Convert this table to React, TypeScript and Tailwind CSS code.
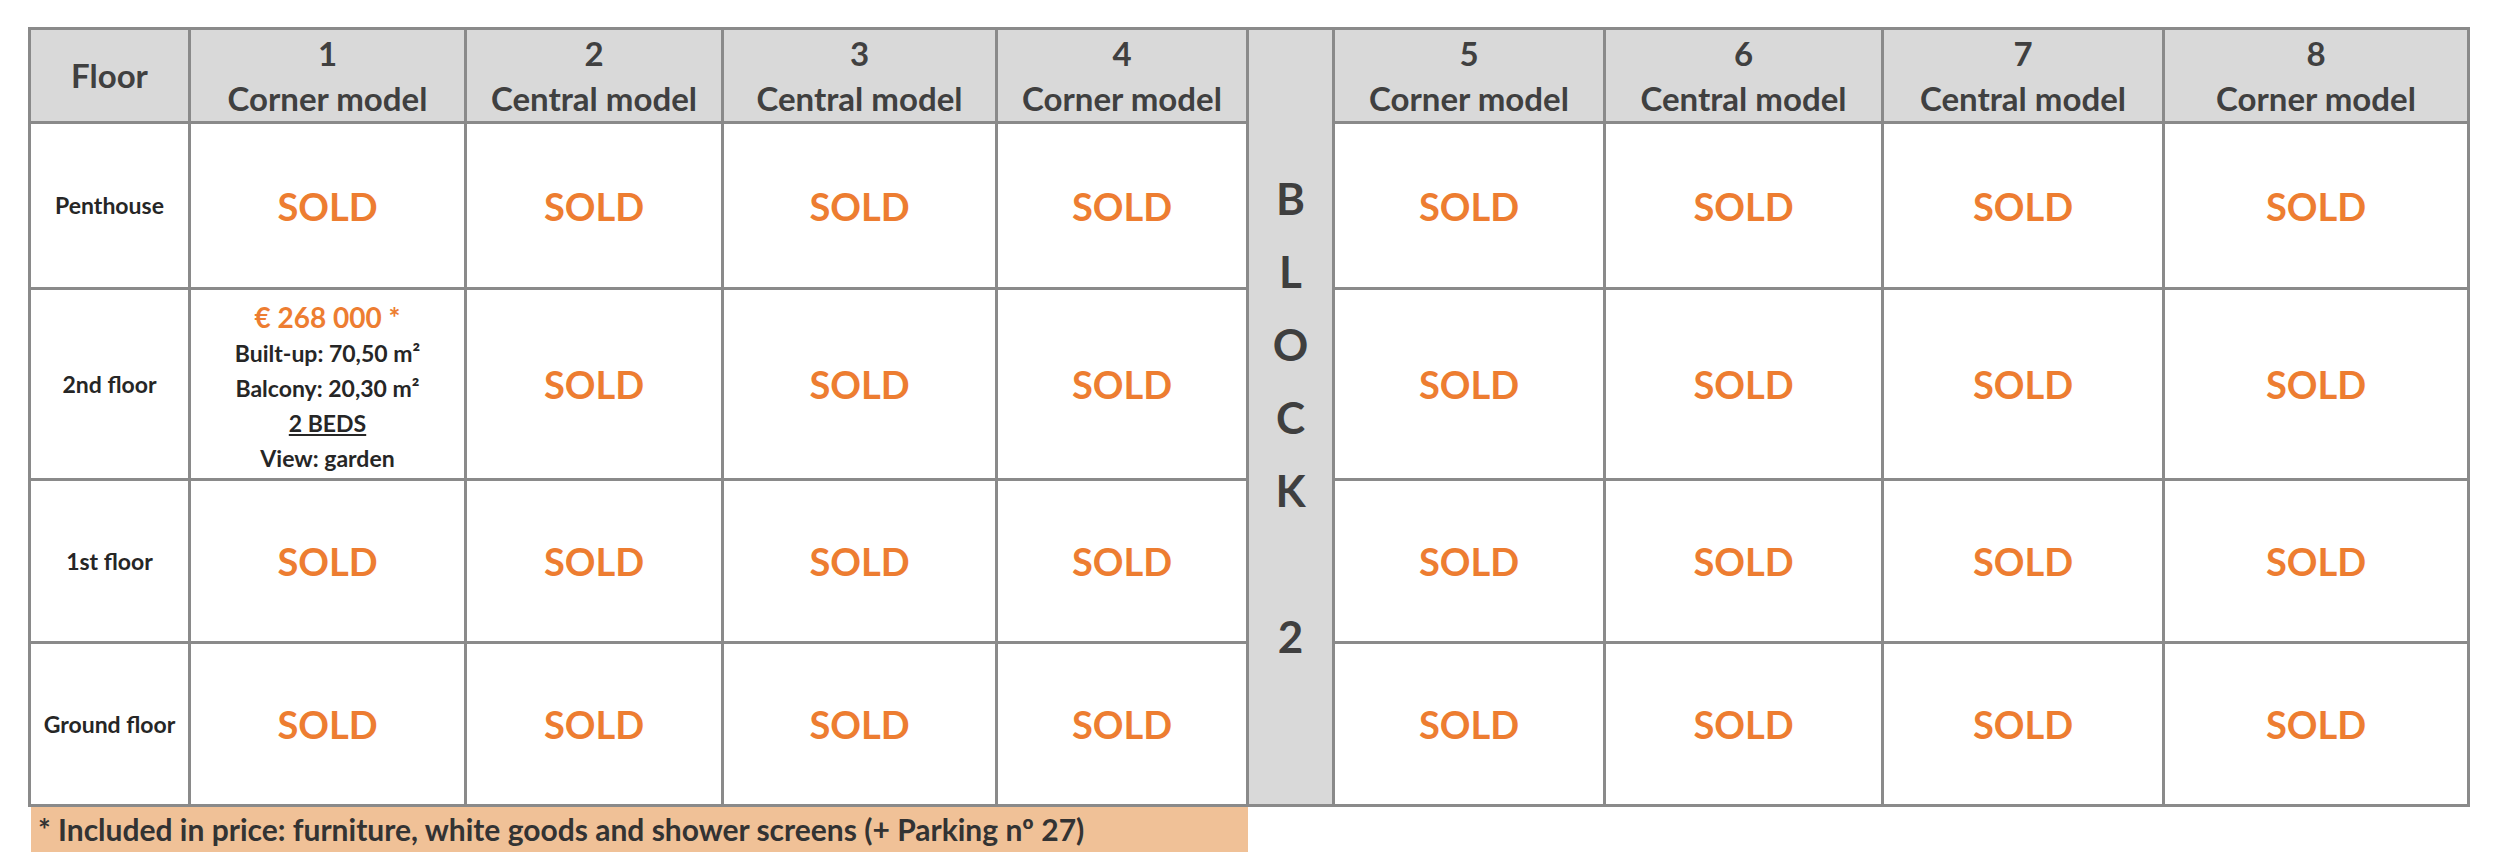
const units = [
  { no: "1", model: "Corner model" },
  { no: "2", model: "Central model" },
  { no: "3", model: "Central model" },
  { no: "4", model: "Corner model" },
  { no: "5", model: "Corner model" },
  { no: "6", model: "Central model" },
  { no: "7", model: "Central model" },
  { no: "8", model: "Corner model" },
];

const floors = ["Penthouse", "2nd floor", "1st floor", "Ground floor"];

const font = { fontFamily: "Lato, 'Open Sans', sans-serif" };

function Sold() {
  return (
    <div className="bg-white flex items-center justify-center">
      <span className="text-[38px] font-bold text-[#ed7d31] leading-none">SOLD</span>
    </div>
  );
}

function Available() {
  // the one unit still for sale
  return (
    <div className="bg-white flex flex-col items-center justify-center pt-[6px] text-[#262626] text-[23px] font-bold leading-[35px]">
      <span className="text-[28px] text-[#ed7d31] leading-[38px]">€ 268 000 *</span>
      <span>Built-up: 70,50 m²</span>
      <span>Balcony: 20,30 m²</span>
      <span className="underline underline-offset-2">2 BEDS</span>
      <span>View: garden</span>
    </div>
  );
}

function UnitHead({ no, model }: { no: string; model: string }) {
  return (
    <div className="bg-[#d9d9d9] flex flex-col items-center justify-center text-[33px] font-bold text-[#404040] leading-[45px]">
      <span>{no}</span>
      <span>{model}</span>
    </div>
  );
}

export default function App() {
  return (
    <div className="bg-white w-[2502px] h-[862px] pl-[28px] pt-[27px]" style={font}>
      <div className="w-fit grid grid-cols-[157px_273px_254px_271px_248px_83px_268px_275px_278px_302px] grid-rows-[91px_163px_188px_160px_160px] gap-[3px] p-[3px] bg-[#8a8a8a]">
        {/* Header */}
        <div className="bg-[#d9d9d9] flex items-center justify-center text-[33px] font-bold text-[#404040]">
          Floor
        </div>
        {units.slice(0, 4).map((u) => (
          <UnitHead key={u.no} no={u.no} model={u.model} />
        ))}
        <div className="row-span-5 bg-[#d9d9d9] flex flex-col items-center justify-center text-[44px] font-bold text-[#3f3f3f] leading-[73px]">
          <span>B</span>
          <span>L</span>
          <span>O</span>
          <span>C</span>
          <span>K</span>
          <span>&nbsp;</span>
          <span>2</span>
        </div>
        {units.slice(4).map((u) => (
          <UnitHead key={u.no} no={u.no} model={u.model} />
        ))}

        {/* Floors */}
        {floors.map((f) => (
          <>
            <div key={f} className="bg-white flex items-center justify-center text-[23px] font-bold text-[#262626]">
              {f}
            </div>
            {units.map((u) =>
              f === "2nd floor" && u.no === "1" ? <Available key={f + u.no} /> : <Sold key={f + u.no} />
            )}
          </>
        ))}
      </div>

      <div className="ml-[3px] w-[1217px] h-[45px] bg-[#f0c197] flex items-center pl-[7px] text-[30px] font-bold text-[#333333]">
        * Included in price: furniture, white goods and shower screens (+ Parking nº 27)
      </div>
    </div>
  );
}
